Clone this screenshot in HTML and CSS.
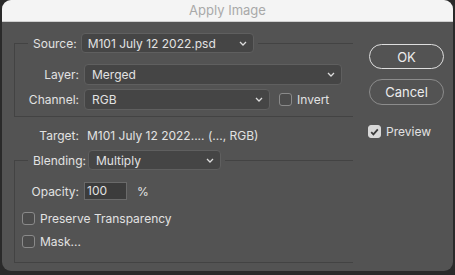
FILE: index.html
```html
<!DOCTYPE html>
<html lang="en">
<head>
  <meta charset="UTF-8" />
  <title>Apply Image</title>
  <link rel="stylesheet" href="styles.css">
</head>
<body>
  <div class="window">
    <div class="titlebar">Apply Image</div>

    <div class="content">
      <div class="main">

        <!-- Source group -->
        <div class="group">
          <div class="group-head">
            <span class="corner"></span>
            <span class="head-label">Source:</span>
            <div class="select select-source">
              <span>M101 July 12 2022.psd</span>
              <svg class="chev" width="8" height="5" viewBox="0 0 8 5"><polyline points="1,1 4,4 7,1" /></svg>
            </div>
            <span class="rule"></span>
          </div>
          <div class="group-body body-source">
            <div class="row">
              <span class="label">Layer:</span>
              <div class="select select-layer">
                <span>Merged</span>
                <svg class="chev" width="8" height="5" viewBox="0 0 8 5"><polyline points="1,1 4,4 7,1" /></svg>
              </div>
            </div>
            <div class="row">
              <span class="label">Channel:</span>
              <div class="select select-channel">
                <span>RGB</span>
                <svg class="chev" width="8" height="5" viewBox="0 0 8 5"><polyline points="1,1 4,4 7,1" /></svg>
              </div>
              <div class="check check-invert"><span class="box"></span>Invert</div>
            </div>
          </div>
        </div>

        <!-- Target -->
        <div class="target">
          <span class="label label-target">Target:</span>
          <span class="target-value">M101 July 12 2022.... (..., RGB)</span>
        </div>

        <!-- Blending group -->
        <div class="group group-blend">
          <div class="group-head">
            <span class="corner"></span>
            <span class="head-label head-blend">Blending:</span>
            <div class="select select-blend">
              <span>Multiply</span>
              <svg class="chev" width="8" height="5" viewBox="0 0 8 5"><polyline points="1,1 4,4 7,1" /></svg>
            </div>
            <span class="rule"></span>
          </div>
          <div class="group-body body-blend">
            <div class="row row-opacity">
              <span class="label">Opacity:</span>
              <div class="field">100</div>
              <span class="unit">%</span>
            </div>
            <div class="check check-row"><span class="box"></span>Preserve Transparency</div>
            <div class="check check-row check-mask"><span class="box"></span>Mask...</div>
          </div>
        </div>

      </div>

      <div class="side">
        <button class="btn btn-ok">OK</button>
        <button class="btn btn-cancel">Cancel</button>
        <div class="check check-preview">
          <span class="box checked">
            <svg width="9" height="8" viewBox="0 0 9 8"><polyline points="1.2,4.2 3.4,6.4 7.8,1.4" /></svg>
          </span>Preview
        </div>
      </div>
    </div>
  </div>
</body>
</html>
```

FILE: styles.css
```css
* { margin: 0; padding: 0; box-sizing: border-box; }

html, body {
  height: 100%;
  background: #2a2a2a;
  font-family: Inter, "Liberation Sans", sans-serif;
  font-size: 12px;
  color: #e2e2e2;
  overflow: hidden;
}

.window {
  margin: 0 2px;
  height: 271px;
  background: #535353;
  border-radius: 9px;
  overflow: hidden;
}

.titlebar {
  height: 22px;
  background: #f4f4f4;
  border-bottom: 1px solid #cfcfcf;
  color: #a9a9a9;
  font-size: 13px;
  line-height: 21px;
  text-align: center;
}

.content {
  display: flex;
}

.main {
  width: 351px;
  padding: 11px 0 0 12px;
}

/* group frames */
.group {
  width: 339px;
}

.group-head {
  display: flex;
  align-items: center;
  height: 20px;
}

.corner {
  align-self: flex-end;
  width: 14px;
  height: 10px;
  border-top: 1px solid #434343;
  border-left: 1px solid #434343;
}

.head-label {
  margin-left: 5px;
  margin-right: 4px;
}

.head-blend {
  margin-right: 2px;
}

.rule {
  flex: 1;
  margin-left: 4px;
  border-top: 1px solid #434343;
}

.group-body {
  border-left: 1px solid #434343;
  border-bottom: 1px solid #434343;
}

.body-source {
  padding: 11px 0 6px;
}

.row {
  display: flex;
  align-items: center;
  height: 21px;
}

.row + .row {
  margin-top: 4px;
}

.label {
  width: 64px;
  margin-right: 5px;
  text-align: right;
}

/* selects */
.select {
  display: flex;
  align-items: center;
  justify-content: space-between;
  height: 21px;
  padding: 0 6px 0 7px;
  background: #454545;
  border: 1px solid #5f5f5f;
  border-radius: 4px;
}

.select-source { width: 173px; height: 20px; padding-left: 6px; }
.select-layer { width: 258px; }
.select-channel { width: 186px; }
.select-blend { width: 133px; height: 20px; }

.chev polyline {
  fill: none;
  stroke: #dcdcdc;
  stroke-width: 1.3;
}

/* checkboxes */
.check {
  display: flex;
  align-items: center;
}

.box {
  width: 13px;
  height: 13px;
  margin-right: 5px;
  border: 1px solid #8a8a8a;
  border-radius: 3px;
  background: #4c4c4c;
}

.box.checked {
  display: flex;
  align-items: center;
  justify-content: center;
  background: #d8d8d8;
  border-color: #d8d8d8;
}

.box.checked polyline {
  fill: none;
  stroke: #3a3a3a;
  stroke-width: 1.8;
}

.check-invert {
  margin-left: 9px;
}

/* target */
.target {
  display: flex;
  align-items: center;
  height: 14px;
  margin-top: 11px;
}

.label-target {
  width: 65px;
  margin-right: 8px;
}

.group-blend {
  margin-top: 8px;
}

.body-blend {
  padding: 12px 0 14px 7px;
}

.row-opacity {
  height: 18px;
  margin-left: -7px;
}

.field {
  width: 43px;
  height: 18px;
  padding-left: 2px;
  line-height: 16px;
  background: #3c3c3c;
  border: 1px solid #6a6a6a;
}

.unit {
  margin-left: 10px;
}

.check-row {
  height: 14px;
  margin-top: 11px;
}

.check-mask {
  margin-top: 9px;
}

/* buttons */
.side {
  width: 75px;
  margin-left: 16px;
  padding-top: 22px;
  display: flex;
  flex-direction: column;
}

.btn {
  height: 25px;
  border-radius: 13px;
  background: transparent;
  font-family: inherit;
  font-size: 13px;
  color: #ececec;
  border: 1.5px solid #dedede;
}

.btn-cancel {
  height: 26px;
  margin-top: 10px;
  border: 1px solid #8c8c8c;
}

.check-preview {
  margin-top: 19px;
  margin-left: -1px;
}
```
